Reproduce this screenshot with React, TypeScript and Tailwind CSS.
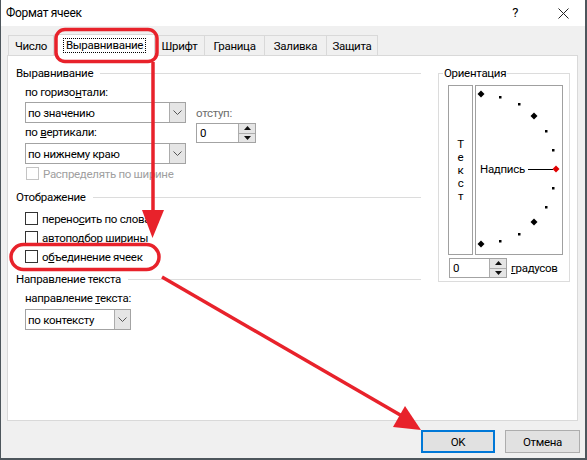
import React from 'react';

const font = "font-[family-name:Roboto,'Noto_Sans',sans-serif]";

const Chevron = () => (
    <svg width="9" height="5" viewBox="0 0 9 5" fill="none">
        <path d="M0.5 0.5 L4.5 4.5 L8.5 0.5" stroke="#555" strokeWidth="1" />
    </svg>
);

const Select = ({ value, width }: { value: string; width: string }) => (
    <div className={`${width} h-[21px] flex border border-[#a3a3a3] bg-white`}>
        <div className="flex-1 pl-[2px] flex items-center text-black">{value}</div>
        <div className="w-[16px] border-l border-[#acacac] bg-[#e5e5e5] flex items-center justify-center">
            <Chevron />
        </div>
    </div>
);

const Spin = ({ width }: { width: string }) => (
    <div className={`${width} h-[20px] flex border border-[#a3a3a3] bg-white`}>
        <div className="flex-1 pl-[3px] flex items-center text-black">0</div>
        <div className="w-[17px] flex flex-col border-l border-[#acacac] bg-[#e5e5e5]">
            <div className="flex-1 flex items-center justify-center border-b border-[#acacac]">
                <svg width="7" height="4" viewBox="0 0 7 4"><path d="M0 4 L3.5 0 L7 4 Z" fill="#111" /></svg>
            </div>
            <div className="flex-1 flex items-center justify-center">
                <svg width="7" height="4" viewBox="0 0 7 4"><path d="M0 0 L3.5 4 L7 0 Z" fill="#111" /></svg>
            </div>
        </div>
    </div>
);

const Check = ({ label, disabled }: { label: React.ReactNode; disabled?: boolean }) => (
    <div className="h-[19px] flex items-center">
        <div className={`w-[13px] h-[13px] border bg-white ${disabled ? 'border-[#c4c4c4]' : 'border-[#333333]'}`} />
        <span className={`ml-[4px] ${disabled ? 'text-[#a0a0a0]' : 'text-black'}`}>{label}</span>
    </div>
);

const GroupHeader = ({ title }: { title: string }) => (
    <div className="h-[16px] flex items-center">
        <span className="text-black">{title}</span>
        <div className="flex-1 ml-[7px] h-px bg-[#dcdcdc]" />
    </div>
);

const tabs = [
    { name: 'Число', w: 'w-[46px]' },
    { name: 'Выравнивание', w: 'w-[101px]', active: true },
    { name: 'Шрифт', w: 'w-[51px]' },
    { name: 'Граница', w: 'w-[61px]' },
    { name: 'Заливка', w: 'w-[63px]' },
    { name: 'Защита', w: 'w-[52px]' },
];

const smallDots = [
    [24, 11], [43, 18], [70, 45], [77, 64], [77, 102], [70, 121], [43, 148], [24, 155],
];
const bigDots = [
    [5, 8], [58, 30], [58, 136], [5, 158],
];

export default function App() {
    return (
        <div className={`${font} text-[11.5px] tracking-[-0.3px] leading-[16px] w-[587px] h-[460px] relative overflow-hidden bg-[#f0f0f0] border-l border-r-2 border-b-2 border-[#4d565c]`}>
            {/* title bar */}
            <div className="h-[26px] bg-white flex items-center pl-[5px]">
                <span className="text-black text-[12px]">Формат ячеек</span>
                <span className="ml-auto mr-[40px] text-black text-[13px]">?</span>
                <svg width="11" height="11" viewBox="0 0 11 11" className="mr-[16px]">
                    <path d="M0.5 0.5 L10.5 10.5 M10.5 0.5 L0.5 10.5" stroke="#222" strokeWidth="1" />
                </svg>
            </div>

            {/* tabs */}
            <div className="pt-[7px] pl-[8px] flex items-end h-[29px]">
                {tabs.map((t) =>
                    t.active ? (
                        <div key={t.name} className={`${t.w} h-[22px] -mb-px relative z-10 bg-white border-l border-t border-r border-[#d9d9d9] flex items-center justify-center`}>
                            <span className="border border-dotted border-black px-[2px] leading-[12px] pb-px">{t.name}</span>
                        </div>
                    ) : (
                        <div key={t.name} className={`${t.w} h-[20px] bg-[#f0f0f0] border-l border-t border-r border-[#d9d9d9] -ml-px flex items-center justify-center text-black`}>
                            {t.name}
                        </div>
                    )
                )}
            </div>

            {/* panel */}
            <div className="ml-[6px] w-[571px] h-[366px] border border-[#d9d9d9] bg-white flex items-start">
                <div className="w-[413px] pl-[8px] pt-[9px]">
                    <GroupHeader title="Выравнивание" />
                    <div className="flex">
                        <div className="pl-[9px]">
                            <div className="mt-[3px] h-[16px]">по горизо<u>н</u>тали:</div>
                            <div className="mt-[2px]"><Select value="по значению" width="w-[161px]" /></div>
                            <div className="mt-[1px] h-[16px]">по <u>в</u>ертикали:</div>
                            <div className="mt-[3px]"><Select value="по нижнему краю" width="w-[161px]" /></div>
                        </div>
                        <div className="ml-[10px]">
                            <div className="mt-[24px] h-[16px] text-[#6d6d6d]">отступ:</div>
                            <div className="mt-[2px]"><Spin width="w-[60px]" /></div>
                        </div>
                    </div>
                    <div className="pl-[10px] mt-[0px]">
                        <Check disabled label="Распределять по ширине" />
                    </div>

                    <div className="mt-[6px]">
                        <GroupHeader title="Отображение" />
                    </div>
                    <div className="pl-[9px] mt-[4px]">
                        <Check label={<>перено<u>с</u>ить по словам</>} />
                        <Check label={<>автоподбор ширины</>} />
                        <Check label={<>о<u>б</u>ъединение ячеек</>} />
                    </div>

                    <div className="mt-[5px]">
                        <GroupHeader title="Направление текста" />
                    </div>
                    <div className="pl-[9px]">
                        <div className="mt-[3px] h-[16px]">направление <u>т</u>екста:</div>
                        <div className="mt-[3px]"><Select value="по контексту" width="w-[106px]" /></div>
                    </div>
                </div>

                {/* orientation */}
                <div className="ml-[17px] mt-[17px] w-[132px] h-[209px] border border-[#dcdcdc] relative">
                    <span className="absolute -top-[9px] left-[4px] bg-white px-px">Ориентация</span>
                    <div className="flex pl-[9px] pt-[11px] gap-[2px]">
                        <div className="w-[25px] h-[170px] border border-[#a0a0a0] flex flex-col items-center justify-center">
                            {['Т', 'е', 'к', 'с', 'т'].map((c, i) => (
                                <span key={i} className="h-[13px] leading-[13px] text-[11.5px]">{c}</span>
                            ))}
                        </div>
                        <div className="w-[88px] h-[170px] border border-[#a0a0a0] relative">
                            <svg width="86" height="168" viewBox="0 0 86 168" className="absolute left-0 top-0">
                                {smallDots.map(([x, y], i) => (
                                    <rect key={i} x={x - 1} y={y - 1} width="2.5" height="2.5" fill="#000" />
                                ))}
                                {bigDots.map(([x, y], i) => (
                                    <path key={i} d={`M${x} ${y - 3.5} L${x + 3.5} ${y} L${x} ${y + 3.5} L${x - 3.5} ${y} Z`} fill="#000" />
                                ))}
                                <line x1="52" y1="83.5" x2="77" y2="83.5" stroke="#000" strokeWidth="1" />
                                <path d="M80 79.5 L83.5 83 L80 86.5 L76.5 83 Z" fill="#e00000" />
                            </svg>
                            <span className="absolute left-[4px] top-[75px] text-black">Надпись</span>
                        </div>
                    </div>
                    <div className="flex items-center pl-[10px] mt-[3px]">
                        <Spin width="w-[58px]" />
                        <span className="ml-[4px]"><u>г</u>радусов</span>
                    </div>
                </div>
            </div>

            {/* buttons */}
            <div className="flex justify-end pr-[5px] mt-[9px] gap-[10px]">
                <button className="w-[74px] h-[23px] border-2 border-[#0078d7] bg-[#e1e1e1] text-black">OK</button>
                <button className="w-[75px] h-[23px] border border-[#adadad] bg-[#e1e1e1] text-black">Отмена</button>
            </div>

            {/* red annotations */}
            <svg width="587" height="460" viewBox="0 0 587 460" className="absolute left-[-1px] top-0 z-20 pointer-events-none">
                <rect x="56" y="29.5" width="101" height="32" rx="9" fill="none" stroke="#e8222b" strokeWidth="3.5" />
                <line x1="153" y1="62" x2="153" y2="214" stroke="#e8222b" strokeWidth="3.5" />
                <path d="M142 210 L164 210 L152.5 238 Z" fill="#e8222b" />
                <rect x="11" y="244.5" width="148" height="25" rx="12.5" fill="none" stroke="#e8222b" strokeWidth="3.5" />
                <line x1="162" y1="277" x2="402" y2="416" stroke="#e8222b" strokeWidth="3.5" />
                <path d="M421 430 L393 427 L405 406 Z" fill="#e8222b" />
            </svg>
        </div>
    );
}
